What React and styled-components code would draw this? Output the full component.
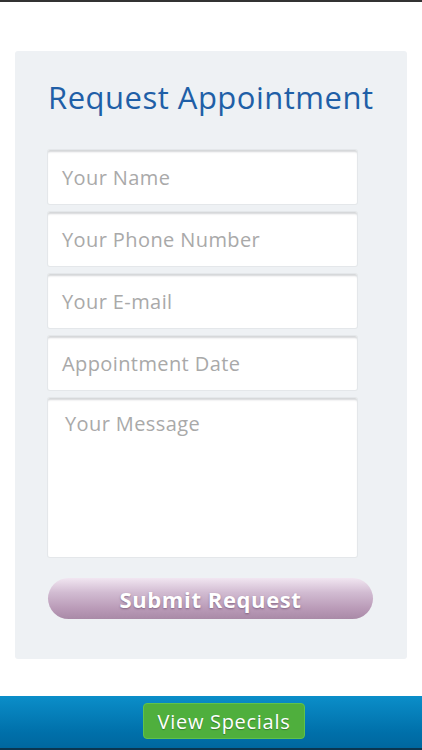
import React from "react";
import styled, { createGlobalStyle } from "styled-components";

const Global = createGlobalStyle`
  html, body { margin: 0; padding: 0; background: #fff; }
  body { font-family: "Open Sans", "Lato", sans-serif; }
  * { box-sizing: border-box; }
`;

const Page = styled.div`
  height: 750px;
  display: flex;
  flex-direction: column;
  border-top: 2px solid #333;
`;

const Main = styled.main`
  flex: 1;
  padding: 49px 15px 0;
`;

const Card = styled.section`
  height: 608px;
  background: #eef1f4;
  border-radius: 3px;
  padding: 28px 33px 0;
  display: flex;
  flex-direction: column;
`;

const Title = styled.h1`
  margin: 0 0 35px;
  font-weight: 400;
  font-size: 31px;
  line-height: 36px;
  color: #1f5fa7;
  white-space: nowrap;
  letter-spacing: 0.5px;
`;

const Fields = styled.div`
  display: flex;
  flex-direction: column;
  gap: 8px;
  width: 309px;
`;

const Field = styled.div`
  height: ${(p) => p.$h}px;
  background: #fff;
  border-radius: 2px;
  box-shadow: inset 0 3px 2px -1px #d4d6d8, 0 0 0 1px #e4e7ea;
  padding: ${(p) => (p.$multi ? "12px 17px" : "0 14px")};
  display: flex;
  align-items: ${(p) => (p.$multi ? "flex-start" : "center")};
  font-size: 20px;
  letter-spacing: 0.4px;
  color: #a9a9a9;
`;

const Submit = styled.button`
  margin-top: 21px;
  width: 325px;
  height: 41px;
  border: none;
  border-radius: 21px;
  background: linear-gradient(#f1e6f1 0%, #d2bcd2 35%, #b99ab7 75%, #a98aa7 100%);
  color: #fff;
  font-family: "Open Sans", "Lato", sans-serif;
  font-weight: 700;
  font-size: 22px;
  letter-spacing: 0.6px;
  text-shadow: 0 1px 2px rgba(80, 50, 80, 0.5);
  padding: 0;
`;

const Footer = styled.footer`
  height: 54px;
  background: linear-gradient(#0b8ec9, #0070aa 70%, #00679f);
  border-bottom: 2px solid #0a3550;
  display: flex;
  padding: 7px 0 0 143px;
`;

const Specials = styled.button`
  width: 162px;
  height: 36px;
  background: #4faf3d;
  border: 1px solid #5fc24b;
  border-radius: 4px;
  color: #fff;
  font-family: "Open Sans", "Lato", sans-serif;
  font-size: 20px;
  font-weight: 400;
  letter-spacing: 0.7px;
  text-shadow: 0 1px 1px rgba(0, 0, 0, 0.3);
  padding: 0;
`;

const fields = [
  { label: "Your Name", h: 54 },
  { label: "Your Phone Number", h: 54 },
  { label: "Your E-mail", h: 54 },
  { label: "Appointment Date", h: 54 },
  { label: "Your Message", h: 159, multi: true },
];

export default function App() {
  return (
    <>
      <Global />
      <Page>
        <Main>
          <Card>
            <Title>Request Appointment</Title>
            <Fields>
              {fields.map((f) => (
                <Field key={f.label} $h={f.h} $multi={f.multi}>
                  {f.label}
                </Field>
              ))}
            </Fields>
            <Submit>Submit Request</Submit>
          </Card>
        </Main>
        <Footer>
          <Specials>View Specials</Specials>
        </Footer>
      </Page>
    </>
  );
}
